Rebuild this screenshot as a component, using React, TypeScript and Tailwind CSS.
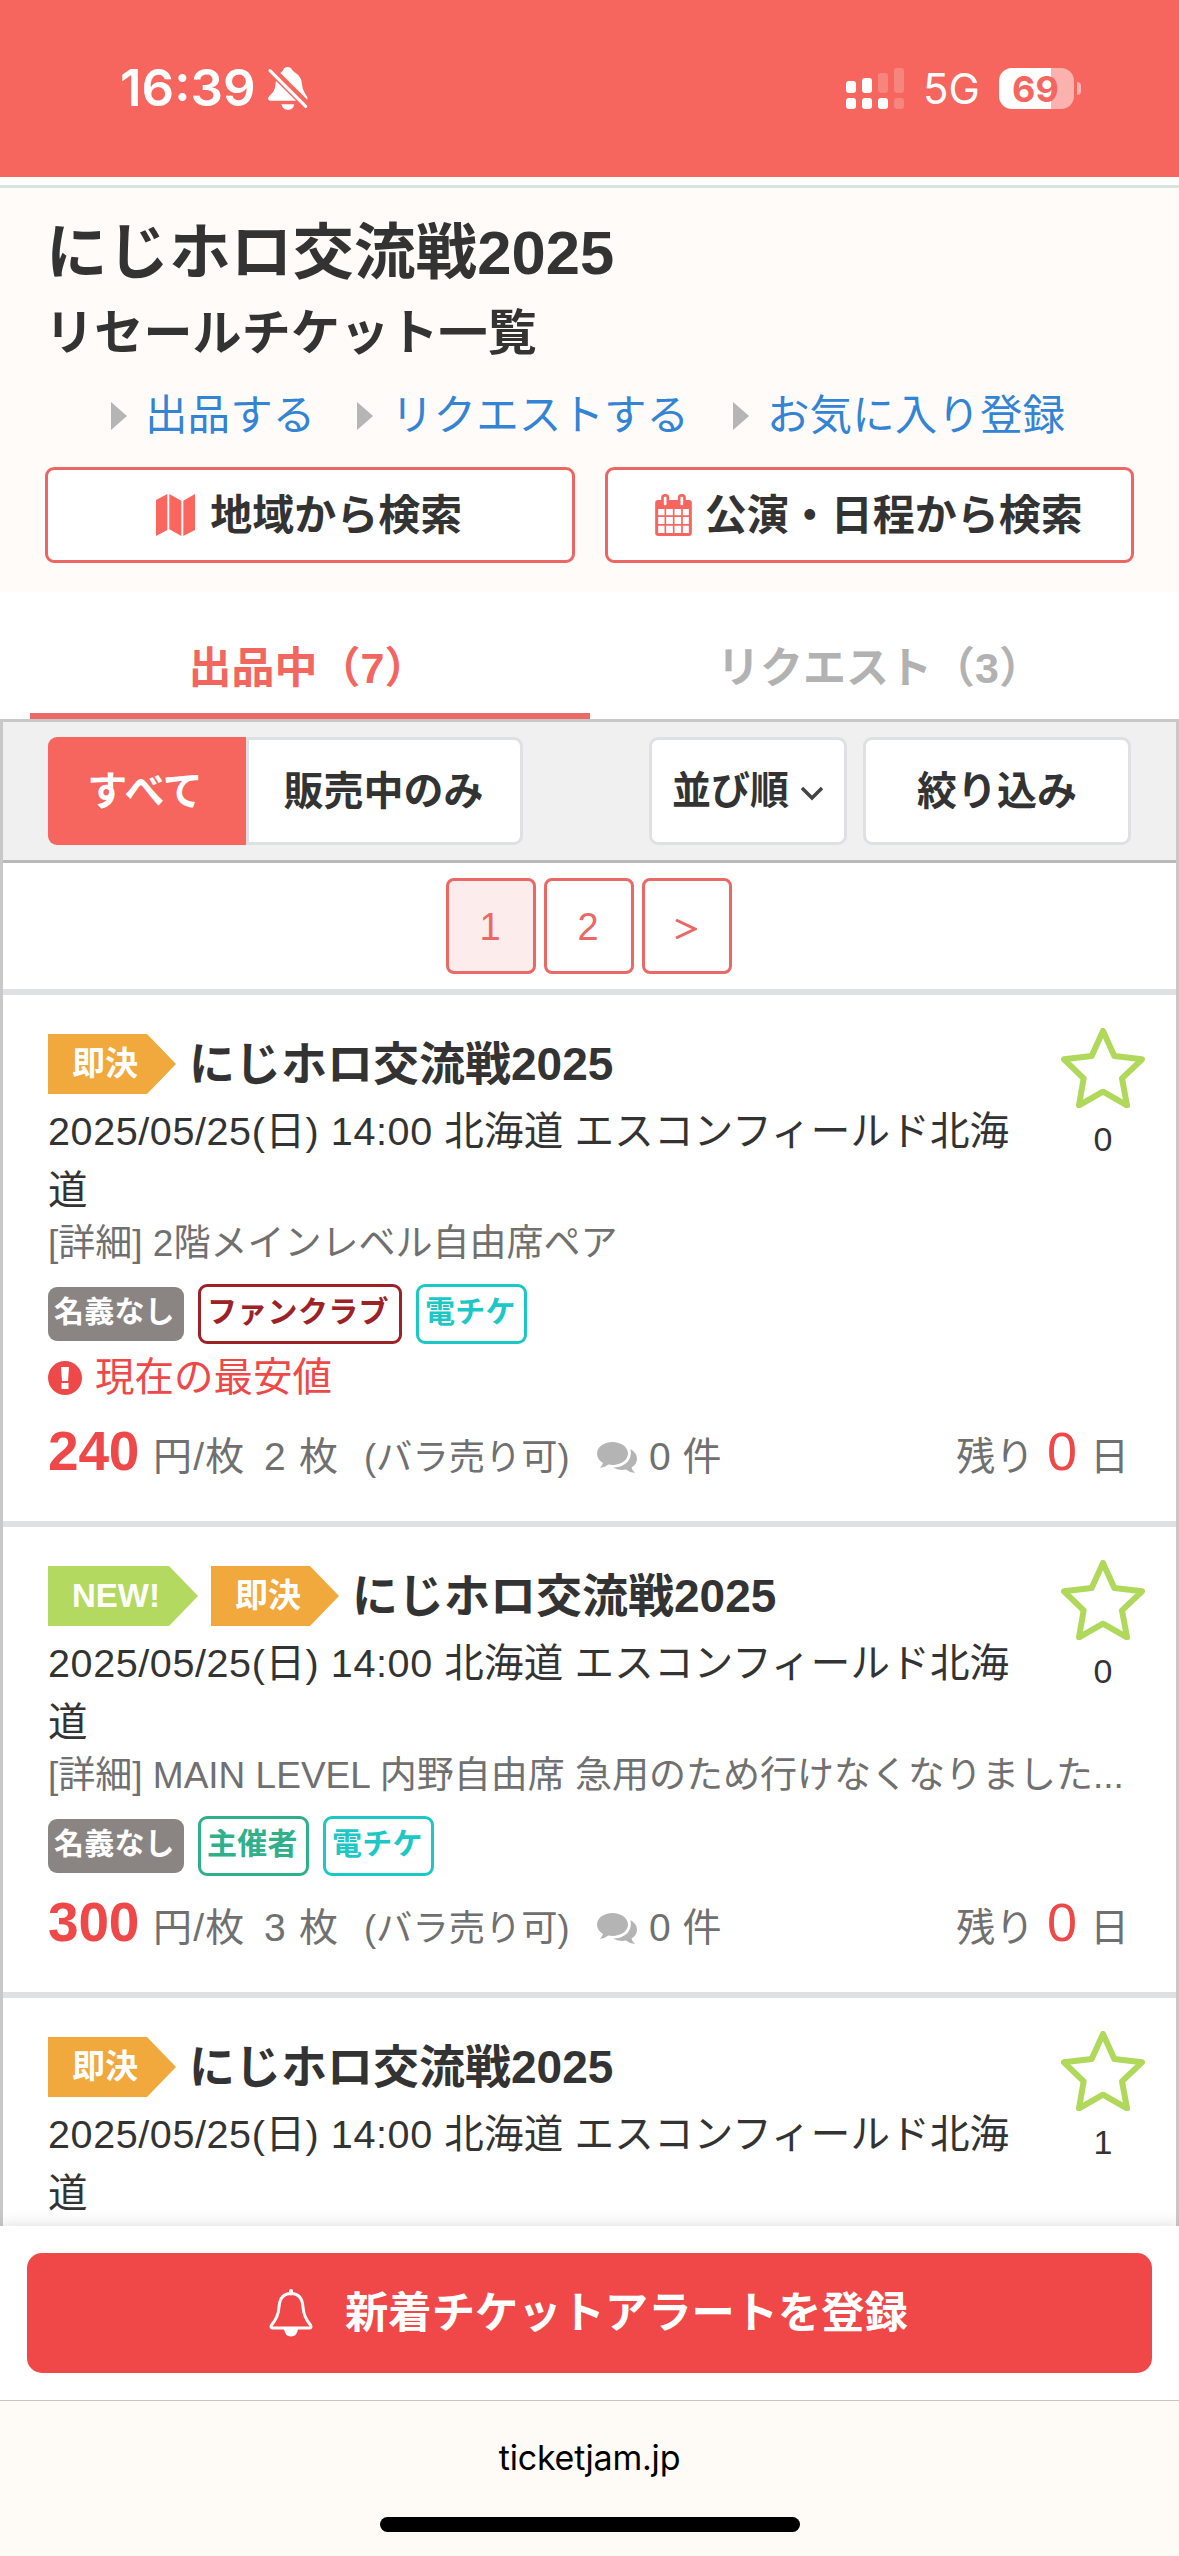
const BellSlash = () => (
  <svg className="ml-[12px] h-[44px] w-[40px]" viewBox="0 0 120 132" fill="#fff">
    <path d="M37 18C41 15 44 12 46 8Q49 0 59 0T72 8Q75 13 82 17Q100 28 102 52Q103 68 110 77L118 91V98Z" />
    <path d="M24 42L84 101H8Q0 101 0 95Q0 90 7 84Q21 72 22 54Z" />
    <path d="M40 112H79Q75 129 60 129T40 112Z" />
    <path d="M6 11L113 118" stroke="#fff" strokeWidth="9" strokeLinecap="round" />
  </svg>
)

const Signal = () => (
  <svg className="h-[41px] w-[58px]" viewBox="0 0 174 123" fill="#fff">
    <rect x="0" y="39" width="30" height="36" rx="9" />
    <rect x="48" y="30" width="30" height="45" rx="9" />
    <rect x="96" y="15" width="30" height="60" rx="9" opacity="0.2" />
    <rect x="144" y="0" width="30" height="75" rx="9" opacity="0.2" />
    <rect x="0" y="90" width="30" height="33" rx="9" />
    <rect x="48" y="90" width="30" height="33" rx="9" />
    <rect x="96" y="90" width="30" height="33" rx="9" />
    <rect x="144" y="90" width="30" height="33" rx="9" opacity="0.2" />
  </svg>
)

const MapIcon = () => (
  <svg className="mr-[15px] h-[42px] w-[39px]" viewBox="0 0 117 126" fill="#fb665e">
    <path d="M0 18L34 0V108L0 126ZM40 0L76 20V126L40 106ZM82 20L117 0V108L82 126Z" />
  </svg>
)

const CalendarIcon = () => (
  <svg className="mr-[13px] h-[42px] w-[37px]" viewBox="0 0 110 126">
    <rect x="0" y="18" width="110" height="108" rx="9" fill="#f7665e" />
    <rect x="18" y="0" width="24" height="40" rx="11" fill="#f7665e" />
    <rect x="68" y="0" width="24" height="40" rx="11" fill="#f7665e" />
    <rect x="26" y="8" width="8" height="26" rx="3" fill="#fff" />
    <rect x="76" y="8" width="8" height="26" rx="3" fill="#fff" />
    <path
      d="M9 45H28V64H9ZM33 45H53V64H33ZM58 45H78V64H58ZM83 45H101V64H83ZM9 69H28V90H9ZM33 69H53V90H33ZM58 69H78V90H58ZM83 69H101V90H83ZM9 95H28V117H9ZM33 95H53V117H33ZM58 95H78V117H58ZM83 95H101V117H83Z"
      fill="#fff"
    />
  </svg>
)

const Star = () => (
  <svg className="h-[80px] w-[84px]" viewBox="62 52 252 240">
    <path
      d="M188 61L222 136L305 146L245 203L260 284L188 243L116 284L130 203L71 146L154 136Z"
      fill="none"
      stroke="#b0d95c"
      strokeWidth="18"
      strokeLinejoin="round"
    />
  </svg>
)

const Comments = () => (
  <svg className="h-[31px] w-[40px] translate-y-[3px]" viewBox="0 0 40 31" fill="#b4b4b4">
    <path d="M15.500 0C24 0 31 5 31 11.500S24 23 15.500 23Q13.500 23 11.500 22.600Q8 25.500 3 25.800Q5.500 23.500 6 21Q0 17.500 0 11.500C0 5 7 0 15.500 0Z" />
    <path d="M33.500 7Q40 11 40 17Q40 22 34.500 25.500Q35 28.500 38 31Q32.500 30.500 29 27.500Q21.500 29 16 25.500Q25 25.500 30.500 20Q35 15 33.500 7Z" />
  </svg>
)

const Bell = () => (
  <svg className="mr-[32px] h-[48px] w-[44px]" viewBox="0 0 44 48" fill="none" stroke="#fff" strokeWidth="3">
    <path
      d="M22 4.500C13.500 4.500 10.500 11 10 18C9.500 27 6 32 2.500 36Q1 39 4 39H40Q43 39 41.500 36C38 32 34.500 27 34 18C33.500 11 30.500 4.500 22 4.500Z"
      strokeLinejoin="round"
    />
    <path d="M22 2V4.500" strokeWidth="4" strokeLinecap="round" />
    <path d="M15 40H29Q28 47.500 22 47.500T15 40Z" fill="#fff" stroke="none" />
  </svg>
)

const Arrow = () => (
  <svg className="h-[28px] w-[16px]" viewBox="0 0 16 28">
    <path d="M0 0L16 14L0 28Z" fill="#b5b5b5" />
  </svg>
)

const Ribbon = ({ children, className }: any) => (
  <span
    className={`mr-[13px] flex h-[60px] items-center pl-[24px] font-bold text-white [clip-path:polygon(0_0,calc(100%-29px)_0,100%_50%,calc(100%-29px)_100%,0_100%)] ${className}`}
  >
    {children}
  </span>
)

const Tag = ({ children, className }: any) => (
  <span
    className={`flex h-[60px] items-center rounded-[9px] border-3 pb-[6px] pl-[6px] text-[30px] font-bold tracking-[0.3px] ${className}`}
  >
    {children}
  </span>
)

const PageButton = ({ children, className }: any) => (
  <button
    className={`flex h-[96px] w-[90px] items-center justify-center rounded-[8px] border-3 border-[#ea6865] pt-[2px] pr-[2px] text-[38px] text-[#ea6865] ${className}`}
  >
    {children}
  </button>
)

const tickets = [
  {
    id: 1,
    isNew: false,
    likes: 0,
    detail: '2階メインレベル自由席ペア',
    tags: [
      { label: 'ファンクラブ', className: 'w-[204px] border-[#9c2228] text-[#9c2228]' },
      { label: '電チケ', className: 'w-[111px] border-[#1cc8c6] text-[#1cc8c6]' },
    ],
    lowest: true,
    price: 240,
    count: 2,
  },
  {
    id: 2,
    isNew: true,
    likes: 0,
    detail: 'MAIN LEVEL 内野自由席 急用のため行けなくなりました...',
    tags: [
      { label: '主催者', className: 'w-[111px] border-[#2fb08b] text-[#2fb08b]' },
      { label: '電チケ', className: 'w-[111px] border-[#1cc8c6] text-[#1cc8c6]' },
    ],
    lowest: false,
    price: 300,
    count: 3,
  },
  {
    id: 3,
    isNew: false,
    likes: 1,
  },
]

const TicketBody = ({ ticket }: any) => (
  <>
    <p className="-mt-[3px] h-[67px] text-[37px] leading-[54px] text-[#707070]">
      [詳細] {ticket.detail}
    </p>
    <div className="flex items-center">
      <span className="mr-[14px] flex h-[54px] w-[136px] items-center rounded-[9px] bg-[#8a8583] pb-[5px] pl-[6px] text-[30px] font-bold tracking-[0.2px] text-white">
        名義なし
      </span>
      <div className="flex gap-[14px]">
        {ticket.tags.map((tag: any) => (
          <Tag key={tag.label} className={tag.className}>
            {tag.label}
          </Tag>
        ))}
      </div>
    </div>
    {ticket.lowest && (
      <p className="mt-[7px] flex h-[54px] items-center text-[39.500px] text-[#ef4849]">
        <svg className="mr-[13px] h-[34px] w-[34px]" viewBox="0 0 34 34">
          <circle cx="17" cy="17" r="17" fill="#ef4849" />
          <path d="M13 6H21L20 20H14ZM13.500 22H20.500V28H13.500Z" fill="#fff" />
        </svg>
        現在の最安値
      </p>
    )}
    <div className="flex h-[116px] items-baseline pt-[4px] text-[39px] leading-[84px] text-[#707070]">
      <span className="w-[105px] text-[55px] font-bold tracking-[-0.2px] text-[#ef4849]">{ticket.price}</span>
      <span className="w-[111px] tracking-[1.2px]">円/枚</span>
      <span className="w-[100px] tracking-[1.2px]">{ticket.count} 枚</span>
      <span className="w-[233px] text-[36.300px]">(バラ売り可)</span>
      <Comments />
      <span className="ml-[12px] tracking-[0.5px]">0 件</span>
      <span className="mr-[47px] ml-auto">
        残り <span className="mx-[2px] text-[54px] text-[#ef4849]">0</span> 日
      </span>
    </div>
  </>
)

const Ticket = ({ ticket }: any) => (
  <li className="border-b-6 border-[#dee0e4] pt-[39px] pl-[45px] last:border-b-0">
    <div className="flex">
      <div className="min-w-0 flex-1">
        <div className="flex h-[60px] items-center">
          {ticket.isNew && <Ribbon className="w-[150px] bg-[#b4d960] text-[33px]">NEW!</Ribbon>}
          <Ribbon className="w-[128px] bg-[#f1a93e] text-[33px]">即決</Ribbon>
          <h3 className="text-[46px] font-bold text-[#333]">にじホロ交流戦2025</h3>
        </div>
        <p className="mt-[8px] text-[39.500px] leading-[59px] tracking-[0.2px] text-[#333]">
          <span className="tracking-[0.6px]">2025/05/25(日) 14:00 </span>北海道 エスコンフィールド北海
          <br />道
        </p>
      </div>
      <div className="-mt-[6px] flex w-[146px] shrink-0 flex-col items-center">
        <Star />
        <span className="mt-[9px] text-[34px] leading-[44px] text-[#333]">{ticket.likes}</span>
      </div>
    </div>
    {ticket.detail && <TicketBody ticket={ticket} />}
  </li>
)

const App = () => {
  return (
    <div className="flex h-[2556px] w-[1179px] flex-col overflow-hidden bg-white font-['Liberation_Sans','Noto_Sans_CJK_JP',sans-serif] whitespace-nowrap">
      <div className="flex h-[177px] shrink-0 items-center justify-between bg-[#f7665e] font-[Inter,sans-serif] text-white">
        <div className="flex items-center pl-[120px]">
          <span className="text-[51px] font-semibold">16:39</span>
          <BellSlash />
        </div>
        <div className="flex items-center pr-[98px]">
          <Signal />
          <span className="ml-[19px] w-[57px] text-[42px]">5G</span>
          <div className="ml-[19px] flex h-[41px] w-[75px] items-center justify-center rounded-[13px] bg-linear-to-r from-white from-69% to-white/50 to-69% pr-[2px] text-[36px] font-bold text-[#f7665e]">
            69
          </div>
          <span className="ml-[3px] h-[13px] w-[4px] rounded-r-full bg-white/50" />
        </div>
      </div>

      <header className="mt-[8px] h-[407px] shrink-0 border-t-3 border-[#d9e1e1] bg-[#fffbf8] px-[45px] text-[#333]">
        <h1 className="mt-[19px] pl-px text-[61.500px] leading-[92px] font-bold tracking-[0.1px]">にじホロ交流戦2025</h1>
        <h2 className="mt-px text-[49px] leading-[66px] font-bold tracking-[0.2px]">リセールチケット一覧</h2>
        <ul className="mt-[18px] flex h-[64px] items-center pl-[66px] text-[42.500px] tracking-[0.1px] text-[#3384d4]">
          <li className="flex w-[246px] items-center gap-[18px]">
            <Arrow />
            出品する
          </li>
          <li className="flex w-[376px] items-center gap-[18px]">
            <Arrow />
            リクエストする
          </li>
          <li className="flex items-center gap-[18px]">
            <Arrow />
            お気に入り登録
          </li>
        </ul>
        <div className="mt-[19px] flex gap-[30px] text-[42px] font-bold">
          <button className="flex h-[96px] flex-1 items-center justify-center rounded-[9px] border-3 border-[#ee6663] bg-white pr-px">
            <MapIcon />
            地域から検索
          </button>
          <button className="flex h-[96px] flex-1 items-center justify-center rounded-[9px] border-3 border-[#ee6663] bg-white pr-px">
            <CalendarIcon />
            公演・日程から検索
          </button>
        </div>
      </header>

      <div className="flex h-[127px] shrink-0 px-[30px] text-[43px] font-bold">
        <div className="flex w-[560px] items-center justify-center border-b-6 border-[#ec6a66] pt-[31px] pr-[4px] text-[#f2665f]">
          出品中（7）
        </div>
        <div className="flex w-[559px] items-center justify-center pt-[25px] pl-[20px] text-[#b2b2b2]">
          リクエスト（3）
        </div>
      </div>

      <main className="min-h-0 flex-1 overflow-hidden border-x-3 border-t-3 border-[#c8c8c8]">
        <div className="flex h-[141px] items-center border-b-3 border-[#b9b9b9] bg-[#f0f0f0] pl-[45px] text-[40px] font-bold text-[#333]">
          <button className="h-[108px] w-[198px] rounded-l-[9px] bg-[#f7665e] pr-[4px] text-white">すべて</button>
          <button className="h-[108px] w-[277px] rounded-r-[9px] border-3 border-[#dee0e4] bg-white pr-[2px]">
            販売中のみ
          </button>
          <button className="ml-[126px] flex h-[108px] w-[198px] items-center rounded-[9px] border-3 border-[#dee0e4] bg-white pl-[20px] text-[39px]">
            並び順
            <svg className="mt-[4px] ml-[11px] h-[15px] w-[24px]" viewBox="0 0 24 15" fill="none">
              <path d="M2 2L12 12L22 2" stroke="#444" strokeWidth="3.500" />
            </svg>
          </button>
          <button className="ml-[16px] h-[108px] w-[268px] rounded-[9px] border-3 border-[#dee0e4] bg-white">
            絞り込み
          </button>
        </div>
        <div className="flex h-[132px] justify-center gap-[8px] border-b-6 border-[#dee0e4] pt-[15px] pr-px">
          <PageButton className="bg-[#fdecec]">1</PageButton>
          <PageButton>2</PageButton>
          <PageButton>
            <svg className="mt-1 h-[20px] w-[22px]" viewBox="0 0 22 20" fill="none">
              <path d="M1 1L20 10L1 19" stroke="#ea6865" strokeWidth="3" />
            </svg>
          </PageButton>
        </div>
        <ul>
          {tickets.map((ticket) => (
            <Ticket key={ticket.id} ticket={ticket} />
          ))}
        </ul>
      </main>

      <div className="z-10 h-[174px] shrink-0 bg-white px-[27px] pt-[27px] shadow-[0_0_15px_rgba(0,0,0,0.15)]">
        <button className="flex h-[120px] w-full items-center justify-center rounded-[15px] bg-[#f04848] pr-[2px] text-[43.300px] font-bold text-white">
          <Bell />
          新着チケットアラートを登録
        </button>
      </div>
      <footer className="z-10 flex h-[156px] shrink-0 flex-col items-center border-t border-[#c4c4c4] bg-[#fefaf6]">
        <span className="mt-[33px] font-[Inter,sans-serif] text-[34px] leading-[48px] tracking-[-0.2px] text-black">
          ticketjam.jp
        </span>
        <span className="mt-[35px] h-[15px] w-[420px] rounded-full bg-black" />
      </footer>
    </div>
  )
}

export default App
